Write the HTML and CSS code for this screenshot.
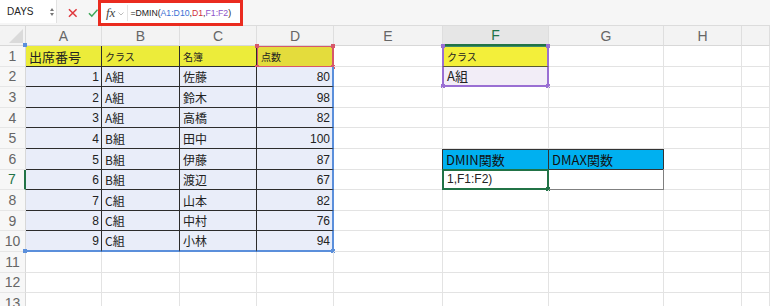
FILE: index.html
```html
<!DOCTYPE html>
<html lang="ja">
<head>
    <meta charset="UTF-8">
    <title>DMIN関数</title>
    <link rel="stylesheet" href="styles.css">
</head>
<body>
    <div class="formula-bar">
        <div class="name-box">
            <span class="name">DAYS</span>
            <span class="stepper"><i class="up"></i><i class="down"></i></span>
        </div>
        <div class="fb-buttons">
            <svg class="btn-x" width="10" height="10" viewBox="0 0 10 10"><path d="M1 1L9 9M9 1L1 9" stroke="#e0393e" stroke-width="1.6" fill="none"/></svg>
            <svg class="btn-ok" width="11" height="10" viewBox="0 0 11 10"><path d="M1 5.2L4 8.3L10 1.5" stroke="#3fa85a" stroke-width="1.6" fill="none"/></svg>
        </div>
        <div class="formula-box">
            <span class="fx">fx</span>
            <svg class="chev" width="6" height="4" viewBox="0 0 6 4"><path d="M0.5 0.5L3 3L5.5 0.5" stroke="#aaa" stroke-width="0.8" fill="none"/></svg>
            <span class="formula">=DMIN(<span class="ref-blue">A1:D10</span>,<span class="ref-red">D1</span>,<span class="ref-purple">F1:F2</span>)</span>
        </div>
    </div>

    <div class="sheet">
        <div class="row head">
            <div class="corner"></div>
            <div class="col">A</div><div class="col">B</div><div class="col">C</div><div class="col">D</div>
            <div class="col">E</div><div class="col col-active">F</div><div class="col">G</div><div class="col">H</div><div class="col"></div>
        </div>

        <div class="row">
            <div class="rh">1</div>
            <div class="c t yellow big">出席番号<span class="h h-tl blue-h"></span></div>
            <div class="c t yellow small">クラス</div>
            <div class="c t yellow small">名簿</div>
            <div class="c t yellow2 small sel-red">点数<span class="h h-tl red-h"></span><span class="h h-tr red-h"></span><span class="h h-bl red-h"></span><span class="h h-br red-h"></span></div>
            <div class="c"></div>
            <div class="c t yellow3 small crit-top">クラス<span class="h h-tl purple-h"></span><span class="h h-tr purple-h"></span></div>
            <div class="c"></div><div class="c"></div><div class="c"></div>
        </div>

        <div class="row">
            <div class="rh">2</div>
            <div class="c t num">1</div><div class="c t">A組</div><div class="c t">佐藤</div><div class="c t num last-col">80</div>
            <div class="c"></div>
            <div class="c t lilac crit-bottom big">A組<span class="h h-bl purple-h"></span><span class="h h-br purple-h"></span></div>
            <div class="c"></div><div class="c"></div><div class="c"></div>
        </div>

        <div class="row">
            <div class="rh">3</div>
            <div class="c t num">2</div><div class="c t">A組</div><div class="c t">鈴木</div><div class="c t num last-col">98</div>
            <div class="c"></div><div class="c"></div><div class="c"></div><div class="c"></div><div class="c"></div>
        </div>

        <div class="row">
            <div class="rh">4</div>
            <div class="c t num">3</div><div class="c t">A組</div><div class="c t">高橋</div><div class="c t num last-col">82</div>
            <div class="c"></div><div class="c"></div><div class="c"></div><div class="c"></div><div class="c"></div>
        </div>

        <div class="row">
            <div class="rh">5</div>
            <div class="c t num">4</div><div class="c t">B組</div><div class="c t">田中</div><div class="c t num last-col">100</div>
            <div class="c"></div><div class="c"></div><div class="c"></div><div class="c"></div><div class="c"></div>
        </div>

        <div class="row">
            <div class="rh">6</div>
            <div class="c t num">5</div><div class="c t">B組</div><div class="c t">伊藤</div><div class="c t num last-col">87</div>
            <div class="c"></div>
            <div class="c t cyan big first">DMIN関数</div>
            <div class="c t cyan big">DMAX関数</div>
            <div class="c"></div><div class="c"></div>
        </div>

        <div class="row">
            <div class="rh rh-active">7</div>
            <div class="c t num">6</div><div class="c t">B組</div><div class="c t">渡辺</div><div class="c t num last-col">67</div>
            <div class="c"></div>
            <div class="c active big">1,F1:F2)<span class="h h-br green-h"></span></div>
            <div class="c boxed"></div>
            <div class="c"></div><div class="c"></div>
        </div>

        <div class="row">
            <div class="rh">8</div>
            <div class="c t num">7</div><div class="c t">C組</div><div class="c t">山本</div><div class="c t num last-col">82</div>
            <div class="c"></div><div class="c"></div><div class="c"></div><div class="c"></div><div class="c"></div>
        </div>

        <div class="row">
            <div class="rh">9</div>
            <div class="c t num">8</div><div class="c t">C組</div><div class="c t">中村</div><div class="c t num last-col">76</div>
            <div class="c"></div><div class="c"></div><div class="c"></div><div class="c"></div><div class="c"></div>
        </div>

        <div class="row">
            <div class="rh">10</div>
            <div class="c t num last-row">9<span class="h h-bl blue-h"></span></div>
            <div class="c t last-row">C組</div>
            <div class="c t last-row">小林</div>
            <div class="c t num last-row last-col">94<span class="h h-br blue-h"></span></div>
            <div class="c"></div><div class="c"></div><div class="c"></div><div class="c"></div><div class="c"></div>
        </div>

        <div class="row">
            <div class="rh">11</div>
            <div class="c"></div><div class="c"></div><div class="c"></div><div class="c"></div>
            <div class="c"></div><div class="c"></div><div class="c"></div><div class="c"></div><div class="c"></div>
        </div>

        <div class="row">
            <div class="rh">12</div>
            <div class="c"></div><div class="c"></div><div class="c"></div><div class="c"></div>
            <div class="c"></div><div class="c"></div><div class="c"></div><div class="c"></div><div class="c"></div>
        </div>

        <div class="row">
            <div class="rh">13</div>
            <div class="c"></div><div class="c"></div><div class="c"></div><div class="c"></div>
            <div class="c"></div><div class="c"></div><div class="c"></div><div class="c"></div><div class="c"></div>
        </div>
    </div>
</body>
</html>
```

FILE: styles.css
```css
html, body {
    margin: 0;
    width: 770px;
    height: 306px;
    overflow: hidden;
    background: #fff;
}
body {
    font-family: "Liberation Sans", "Noto Sans CJK JP", sans-serif;
    color: #222;
}

/* formula bar */
.formula-bar {
    display: flex;
    align-items: center;
    height: 26px;
    box-sizing: border-box;
    background: #f6f6f6;
    border-bottom: 1px solid #dcdcdc;
}
.name-box {
    display: flex;
    align-items: center;
    justify-content: space-between;
    width: 57px;
    height: 23px;
    box-sizing: border-box;
    padding: 0 2px 0 7px;
    background: #fff;
    border-right: 1px solid #e2e2e2;
    align-self: flex-start;
}
.name {
    font-size: 10px;
    color: #222;
}
.stepper {
    display: flex;
    flex-direction: column;
    gap: 2px;
}
.stepper i {
    width: 0;
    height: 0;
    border-left: 2.5px solid transparent;
    border-right: 2.5px solid transparent;
}
.stepper .up { border-bottom: 3px solid #777; }
.stepper .down { border-top: 3px solid #777; }
.fb-buttons {
    display: flex;
    align-items: center;
    gap: 10px;
    width: 41px;
    padding-left: 11px;
    box-sizing: border-box;
}
.formula-box {
    display: flex;
    align-items: center;
    width: 145px;
    height: 26px;
    box-sizing: border-box;
    border: 3px solid #ea2b1f;
    background: #fff;
    align-self: flex-start;
}
.fx {
    font-family: "Liberation Serif", serif;
    font-style: italic;
    font-size: 13px;
    color: #444;
    margin-left: 5px;
}
.chev {
    margin: 2px 3px 0 3px;
}
.formula {
    border-left: 1px solid #e4e4e4;
    padding-left: 2px;
    font-size: 8.7px;
    color: #222;
    line-height: 16px;
}
.ref-blue { color: #3b6fd4; }
.ref-red { color: #cf2f3a; }
.ref-purple { color: #8d53c9; }

/* sheet grid */
.row {
    display: grid;
    grid-template-columns: 26px 76px 78px 77px 77px 109px 106px 115px 78px 28px;
    height: 20.6px;
}
.row.head {
    height: 20px;
    background: #f3f3f3;
}
.corner {
    position: relative;
    border-right: 1px solid #d8d8d8;
    border-bottom: 1px solid #d8d8d8;
    background: #f3f3f3;
}
.corner::after {
    content: "";
    position: absolute;
    right: 2px;
    bottom: 2px;
    border-left: 14px solid transparent;
    border-bottom: 14px solid #dadada;
}
.col {
    display: flex;
    align-items: center;
    justify-content: center;
    font-size: 14px;
    color: #666;
    border-right: 1px solid #dedede;
    border-bottom: 1px solid #d8d8d8;
    box-sizing: border-box;
}
.col-active {
    background: #e6e6e6;
    color: #217346;
    border-bottom: 2px solid #217346;
}
.rh {
    display: flex;
    align-items: center;
    justify-content: center;
    font-size: 14px;
    color: #666;
    background: #f7f7f7;
    border-right: 1px solid #d8d8d8;
    border-bottom: 1px solid #e6e6e6;
    box-sizing: border-box;
}
.rh-active {
    color: #217346;
    border-right: 2px solid #217346;
}
.c {
    position: relative;
    display: flex;
    align-items: flex-end;
    padding: 0 2px 2px 3px;
    box-sizing: border-box;
    font-size: 12px;
    line-height: 14px;
    white-space: nowrap;
    border-right: 1px solid #e3e3e3;
    border-bottom: 1px solid #e3e3e3;
    font-family: "Noto Sans CJK JP", sans-serif;
}

/* table A1:D10 */
.t {
    background: #e9edf9;
    border-right-color: #2c2c2c;
    border-bottom-color: #2c2c2c;
}
.num {
    justify-content: flex-end;
    font-family: "Liberation Sans", sans-serif;
    font-size: 12px;
}
.big { font-size: 13px; }
.small { font-size: 10px; }
.yellow { background: #ecec3a; }
.yellow2 { background: #e4dc3c; }
.yellow3 { background: #f3ef3a; }
.lilac { background: #f2edf7; }
.last-col {
    border-right: 2px solid #5b8fdb;
}
.last-row {
    border-bottom: 2px solid #5b8fdb;
}
.sel-red {
    border: 1px solid #d7586a;
    border-right-width: 2px;
}

/* criteria F1:F2 */
.crit-top {
    border-left: 2px solid #9a6fd3;
    border-right: 2px solid #9a6fd3;
    border-top: 1px solid #3f8a6a;
    border-bottom-color: #5a5a30;
}
.crit-bottom {
    border-left: 2px solid #9a6fd3;
    border-right: 2px solid #9a6fd3;
    border-bottom: 2px solid #9a6fd3;
}
.row > .crit-top, .row > .crit-bottom {
    margin-left: -1px;
}

/* result box F6:G7 */
.cyan {
    background: #00b0f0;
    border: 1px solid #333;
    border-left: none;
    color: #111;
}
.cyan.first {
    border-left: 1px solid #333;
    margin-left: -1px;
}
.active {
    border: 2px solid #217346;
    margin-left: -1px;
    margin-top: -1px;
    font-family: "Liberation Sans", sans-serif;
    font-size: 12px;
    color: #222;
}
.boxed {
    border-right: 1.5px solid #808080;
    border-bottom: 1.5px solid #808080;
    margin-top: -1px;
}

/* selection handles */
.h {
    position: absolute;
    width: 4px;
    height: 4px;
}
.h-tl { left: -3px; top: -3px; }
.h-tr { right: -3px; top: -3px; }
.h-bl { left: -3px; bottom: -3px; }
.h-br { right: -3px; bottom: -3px; }
.red-h { background: #d7586a; }
.purple-h { background: #9a6fd3; }
.blue-h { background: #5b8fdb; }
.green-h { background: #217346; }
```
